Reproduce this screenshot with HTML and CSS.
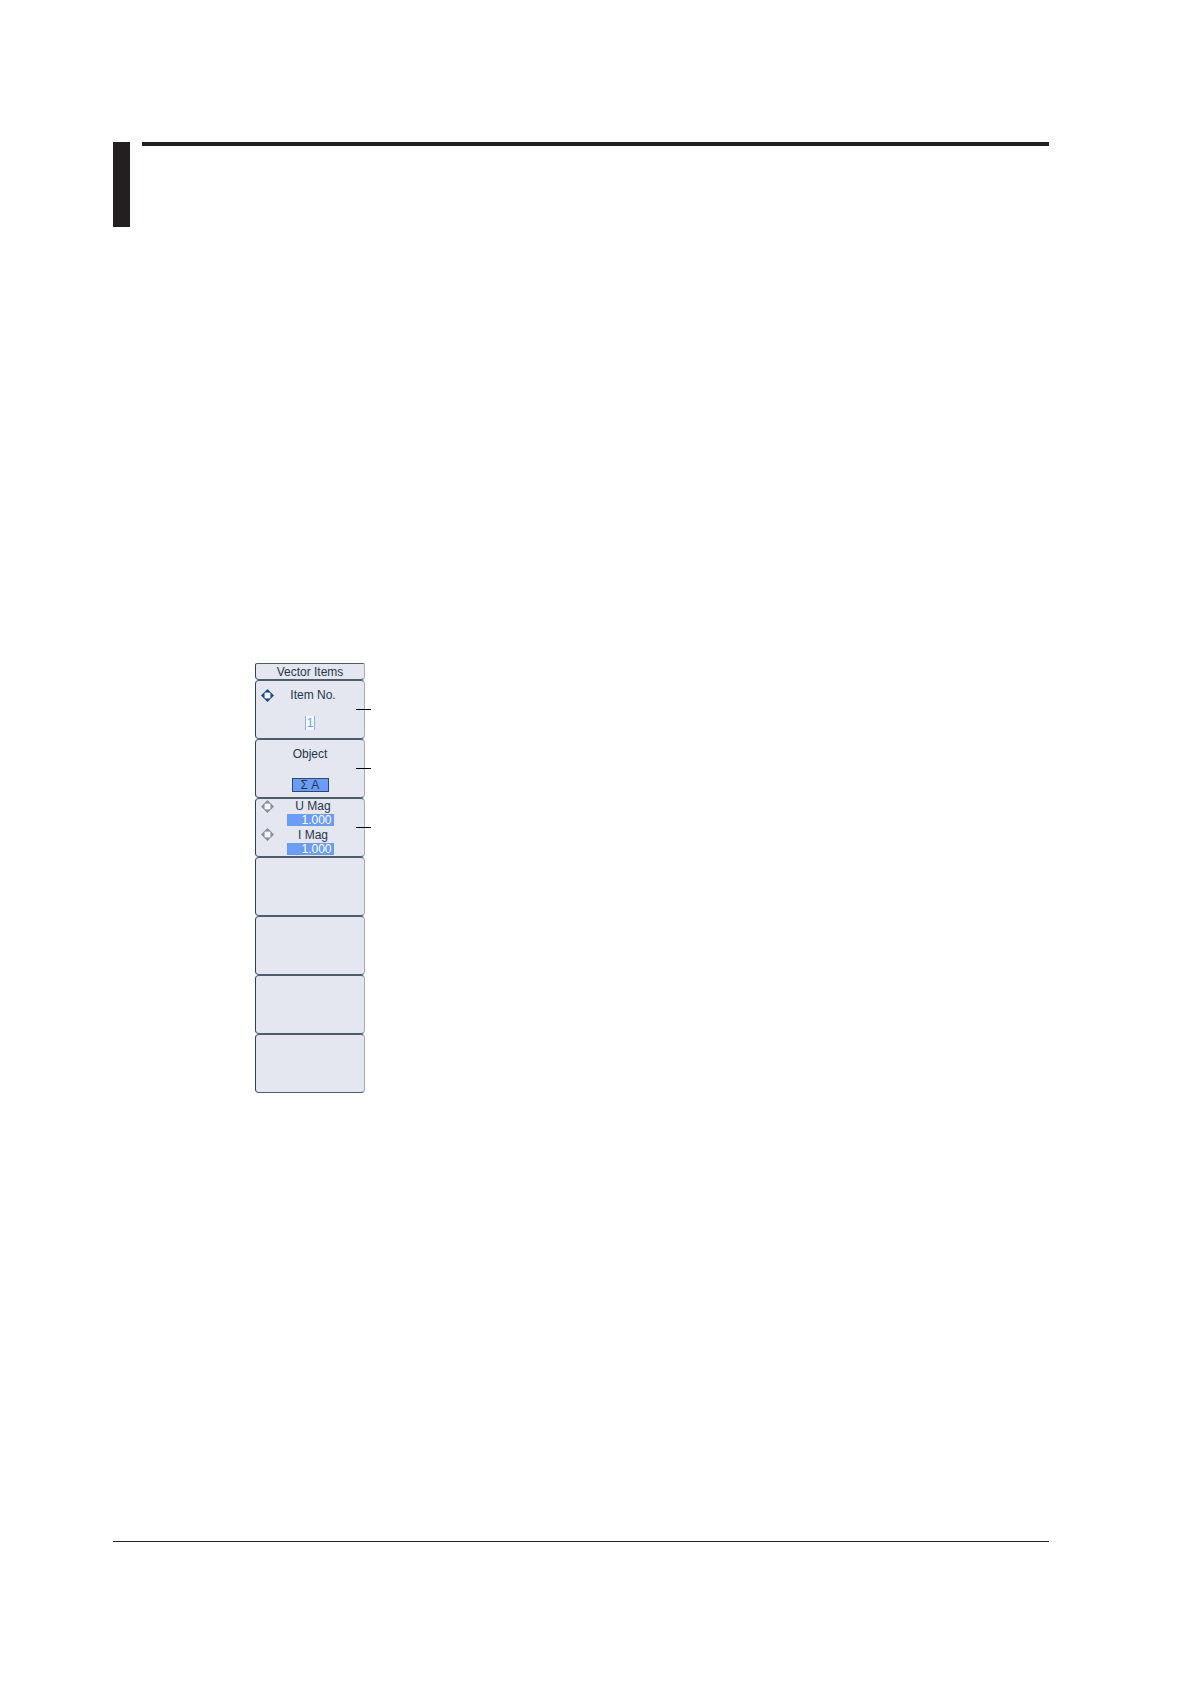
FILE: index.html
```html
<!DOCTYPE html>
<html lang="en">
<head>
<meta charset="utf-8">
<meta name="viewport" content="width=device-width, initial-scale=1">
<title>Vector Items</title>
<link rel="stylesheet" href="styles.css">
</head>
<body>
<svg class="symbols" aria-hidden="true">
  <symbol id="cursor-keys" viewBox="0 0 13 13">
    <path fill="#f3f6fd" d="M4 4h5v5H4Z"/>
    <path fill="currentColor" d="M6.5 0 10 3.500H3ZM6.500 13 3 9.500h7ZM0 6.500 3.500 3v7ZM13 6.500 9.500 10V3Z"/>
    <path fill="none" stroke="currentColor" stroke-opacity=".6" d="M3 4.500 4.500 3M8.500 3 10 4.500M10 8.500 8.500 10M4.500 10 3 8.500"/>
  </symbol>
</svg>
<header class="page-header">
  <div class="section-tab"></div>
  <div class="header-rule"></div>
</header>
<main class="content">
  <nav class="menu" aria-labelledby="menu-title">
    <h1 class="menu-title" id="menu-title">Vector Items</h1>
    <button type="button" class="softkey callout">
      <svg class="keys active"><use href="#cursor-keys"/></svg>
      <span class="label">Item No.</span>
      <span class="number">1</span>
    </button>
    <button type="button" class="softkey callout">
      <span class="label">Object</span>
      <span class="choice">Σ A</span>
    </button>
    <button type="button" class="softkey callout double">
      <svg class="keys"><use href="#cursor-keys"/></svg>
      <span class="label">U Mag</span>
      <span class="value">1.000</span>
      <svg class="keys"><use href="#cursor-keys"/></svg>
      <span class="label">I Mag</span>
      <span class="value">1.000</span>
    </button>
    <button type="button" class="softkey" aria-label="Unassigned" disabled></button>
    <button type="button" class="softkey" aria-label="Unassigned" disabled></button>
    <button type="button" class="softkey" aria-label="Unassigned" disabled></button>
    <button type="button" class="softkey" aria-label="Unassigned" disabled></button>
  </nav>
</main>
<footer class="page-footer"></footer>
</body>
</html>
```
FILE: styles.css
```css
* {
  box-sizing: border-box;
}

body {
  display: flex;
  flex-direction: column;
  min-height: 100vh;
  margin: 0;
  padding: 142px 142px 142px 113px;
  background: #fff;
  color: #24384a;
  font: 12px/14px "Liberation Sans", Arial, sans-serif;
}

.symbols {
  position: absolute;
  width: 0;
  height: 0;
}

.page-header {
  display: flex;
  gap: 12px;
}

.section-tab {
  width: 17px;
  height: 85px;
  background: #231f20;
}

.header-rule {
  flex: 1;
  height: 4px;
  background: #231f20;
}

.content {
  flex: 1;
  padding: 436px 0 0 142px;
}

.page-footer {
  border-top: 1px solid #231f20;
}

.menu {
  display: flex;
  flex-direction: column;
  width: 110px;
}

.menu-title,
.softkey {
  margin: 0;
  border: 1px solid #4a5d69;
  border-left-color: #2c4350;
  border-right-color: #a4acb4;
  border-radius: 4px;
  background: #e4e6f0;
  color: inherit;
  font: inherit;
}

.menu-title {
  height: 17px;
  border-radius: 2px 2px 4px 4px;
  line-height: 16px;
  text-align: center;
}

.softkey {
  position: relative;
  display: grid;
  grid-template-columns: 18px 1fr 18px;
  grid-template-rows: 28px 28px;
  align-items: center;
  justify-items: center;
  height: 59px;
  padding: 0 5px;
}

.softkey.double {
  grid-template-rows: 14px 14px 15px 13px;
}

.callout::after {
  content: "";
  position: absolute;
  top: 28px;
  left: 100px;
  width: 15px;
  height: 1px;
  background: #000;
}

.keys {
  grid-column: 1;
  justify-self: start;
  width: 13px;
  height: 13px;
  color: #8c8e93;
}

.keys.active {
  color: #174a8c;
}

.label,
.number,
.choice,
.value {
  grid-column: 2;
  white-space: nowrap;
}

.keys + .label {
  padding-left: 6px;
}

.number {
  padding: 0 1px;
  border: solid #8cb0f4;
  border-width: 0 1px;
  background: #f4f8ff;
  color: #6c9cf8;
}

.choice {
  align-self: end;
  width: 37px;
  margin-bottom: 4px;
  border: 1px solid #2c4878;
  background: #6c9cfa;
  line-height: 12px;
}

.value {
  width: 47px;
  padding-right: 2px;
  background: #6c9cfa;
  color: #fff;
  line-height: 12px;
  text-align: right;
}
```
